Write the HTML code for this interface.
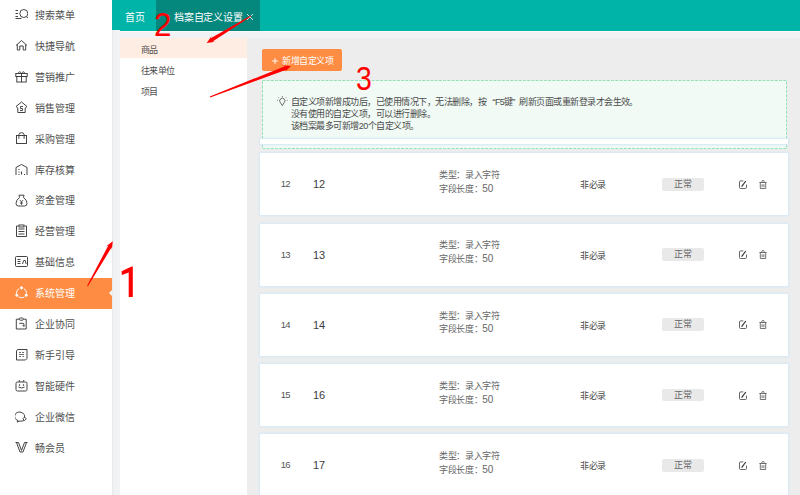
<!DOCTYPE html>
<html lang="zh-CN">
<head>
<meta charset="utf-8">
<style>
*{margin:0;padding:0;box-sizing:border-box}
html,body{width:800px;height:495px;overflow:hidden;background:#ededed;font-family:"Liberation Sans",sans-serif;color:#333}
.a{position:absolute;white-space:nowrap}
#side{position:absolute;left:0;top:0;width:112px;height:495px;background:#fff}
.mi{position:absolute;left:0;width:112px;height:31px}
.mi svg{position:absolute;left:15px;top:8.2px;width:13px;height:13px}
.mi span{position:absolute;left:35px;top:0;line-height:31px;font-size:10px;color:#505050}
.mi.on{background:#fe8c42}
.mi.on span{color:#fff}
#gap{position:absolute;left:112px;top:30px;width:8px;height:465px;background:#f1f2f4}
#gap:before{content:"";position:absolute;left:0;top:0;width:2px;height:100%;background:linear-gradient(90deg,#e6e7e9,#f1f2f4)}
#hdr{position:absolute;left:112px;top:0;width:688px;height:30.9px;background:#00b4a7}
#band{position:absolute;left:112px;top:30.9px;width:688px;height:6.9px;background:#f1f2f4;border-top:1px solid #faf9fb}
#sub{position:absolute;left:120px;top:37.6px;width:127.4px;height:458px;background:#fff}
.si{position:absolute;left:21px;font-size:9px;line-height:21px;color:#505050;letter-spacing:-0.55px;margin-top:1.7px}
.btn{position:absolute;left:262px;top:49px;width:80px;height:22px;background:#fe8c42;border-radius:2px;color:#fff;font-size:9px;line-height:22px;letter-spacing:-0.5px}
#tip{position:absolute;left:262px;top:80px;width:525px;height:69px;background:#f1faf5}
.tl{position:absolute;left:29px;font-size:9px;line-height:12px;color:#4a4a4a;letter-spacing:-0.52px;margin-top:0.8px}
.card{position:absolute;left:260px;width:528px;height:62px;background:#fff;box-shadow:0 0 1.5px 0.6px rgba(214,232,248,1)}
.c1{position:absolute;left:20.8px;top:0px;line-height:62px;font-size:9.5px;color:#555;letter-spacing:-0.8px}
.c2{position:absolute;left:53px;top:0;line-height:62px;font-size:11px;color:#3c3c3c}
.c3{position:absolute;left:179px;font-size:9px;line-height:13px;color:#666;letter-spacing:-0.35px}
.c4{position:absolute;left:320px;top:1px;line-height:62px;font-size:9px;color:#4a4a4a;letter-spacing:-0.4px}
.bd{position:absolute;left:401.8px;top:24.6px;width:42px;height:12.6px;background:#e9e9e9;border-radius:2px;font-size:9px;line-height:13px;text-align:center;color:#666;letter-spacing:-0.4px}
.ic{position:absolute;top:26.6px;width:8px;height:9px}
.red{position:absolute;color:#ff0000;font-family:"Liberation Sans",sans-serif;line-height:1}
</style>
</head>
<body>
<div id="hdr">
  <div class="a" style="left:13px;top:2.5px;line-height:30px;font-size:10px;color:#fff">首页</div>
  <div class="a" style="left:44px;top:0;width:104px;height:30.9px;background:#04877d"></div>
  <div class="a" style="left:62px;top:2.5px;line-height:30px;font-size:10px;color:#fff;letter-spacing:-0.25px">档案自定义设置</div>
  <svg class="a" style="left:134px;top:13px;width:8px;height:8px" viewBox="0 0 8 8" stroke="#e6f3f2" stroke-width="0.9"><path d="M1 1L7 7M7 1L1 7"/></svg>
</div>
<div id="band"></div>
<div id="side">
  <div class="mi" style="top:0"><svg viewBox="0 0 13 13" fill="none" stroke="#3a3a3a" stroke-width="0.95"><path d="M0.5 2.5h2.5M0.5 5.5h2.5M0.5 8.5h2.5M0.5 10.5h6"/><circle cx="8.8" cy="5.5" r="4"/><path d="M11.5 8.5l1.5 1.8"/></svg><span>搜索菜单</span></div>
  <div class="mi" style="top:30.9px"><svg viewBox="0 0 13 13" fill="none" stroke="#3a3a3a" stroke-width="0.95"><path d="M1 6.5L6.5 1.5L12 6.5M2.3 5.5v5.5h2.5v-4h3.4v4h2.5v-5.5"/></svg><span>快捷导航</span></div>
  <div class="mi" style="top:61.8px"><svg viewBox="0 0 13 13" fill="none" stroke="#3a3a3a" stroke-width="0.95"><rect x="0.8" y="3.5" width="11.4" height="3"/><rect x="1.8" y="6.5" width="9.4" height="5.5"/><path d="M6.5 3.5v8.5M6.5 3.5C5 1 3.5 1.5 3.5 3.5M6.5 3.5C8 1 9.5 1.5 9.5 3.5"/></svg><span>营销推广</span></div>
  <div class="mi" style="top:92.7px"><svg viewBox="0 0 13 13" fill="none" stroke="#3a3a3a" stroke-width="0.95"><path d="M6.5 1L1 5.5l1.8 1.5V11.5h7.4V7l1.8-1.5z"/><path d="M8 5.5H5.5v2h2v2H5" stroke-width="0.9"/></svg><span>销售管理</span></div>
  <div class="mi" style="top:123.6px"><svg viewBox="0 0 13 13" fill="none" stroke="#3a3a3a" stroke-width="0.95"><rect x="1.5" y="3.5" width="10" height="8"/><path d="M3.9 6.8V2.6Q3.9 0.7 6.5 0.7Q9.1 0.7 9.1 2.6V6.8"/></svg><span>采购管理</span></div>
  <div class="mi" style="top:154.5px"><svg viewBox="0 0 13 13" fill="none" stroke="#3a3a3a" stroke-width="0.95"><path d="M1 12V4.5L6.5 1.5L12 4.5V12"/><path d="M3.5 6.5h1M3.5 9h1M3.5 11.5h1M6.5 8.5v3M9 11.5h1" stroke-width="1.1"/></svg><span>库存核算</span></div>
  <div class="mi" style="top:185.4px"><svg viewBox="0 0 13 13" fill="none" stroke="#3a3a3a" stroke-width="0.95"><path d="M4 1.2h5L8.5 3.5Q12 6 12 9.5Q12 12 9.5 12h-6Q1 12 1 9.5Q1 6 4.5 3.5z"/><path d="M4.8 6l1.7 1.8L8.2 6M6.5 7.8v3M5 9h3" stroke-width="0.9"/></svg><span>资金管理</span></div>
  <div class="mi" style="top:216.3px"><svg viewBox="0 0 13 13" fill="none" stroke="#3a3a3a" stroke-width="0.95"><path d="M3.5 2H1.5v10.5h10V2H9.5"/><rect x="4" y="1" width="5" height="2"/><path d="M3.5 5h6M3.5 7.5h6M3.5 10h6"/></svg><span>经营管理</span></div>
  <div class="mi" style="top:247.2px"><svg viewBox="0 0 13 13" fill="none" stroke="#3a3a3a" stroke-width="0.95"><rect x="0.5" y="1.5" width="12" height="10" rx="1"/><path d="M2.5 4.5h3M2.5 6.5h3M2.5 8.5h3M7.5 9l1.2-3.5h1.5l1 3.5"/></svg><span>基础信息</span></div>
  <div class="mi on" style="top:278px"><svg viewBox="0 0 13 13" fill="none" stroke="#fff" stroke-width="1"><path d="M4.2 2.6A5 5 0 0 0 1.5 7.5M8.8 2.6A5 5 0 0 1 11.5 7.5M3.5 10.8A5 5 0 0 0 9.5 10.8"/><circle cx="6.5" cy="1.8" r="1.1" fill="#fff"/><circle cx="1.8" cy="9.2" r="1.1" fill="#fff"/><circle cx="11.2" cy="9.2" r="1.1" fill="#fff"/></svg><span>系统管理</span>
    <div style="position:absolute;left:109px;top:11.7px;width:0;height:0;border-top:3px solid transparent;border-bottom:3px solid transparent;border-right:3px solid #eef6fa"></div></div>
  <div class="mi" style="top:309px"><svg viewBox="0 0 13 13" fill="none" stroke="#3a3a3a" stroke-width="0.95"><path d="M4 2.2H1.3V12h9.9V2.2H8.6"/><rect x="4.2" y="1" width="4.2" height="2.2" rx="1.1"/><path d="M4.3 6.3H8Q8.8 6.3 8.8 7.1V9.3M7.8 8.4l1 1 1-1"/></svg><span>企业协同</span></div>
  <div class="mi" style="top:339.9px"><svg viewBox="0 0 13 13" fill="none" stroke="#3a3a3a" stroke-width="0.95"><path d="M2.5 1.5h9.5v9l-1.5 1.5H1.5V3z"/><path d="M4 4.5h2M7 4.5h2M4 6.5h5M4 8.5h2M7.5 8.5h1.5" stroke="#666"/></svg><span>新手引导</span></div>
  <div class="mi" style="top:370.8px"><svg viewBox="0 0 13 13" fill="none" stroke="#3a3a3a" stroke-width="0.95"><rect x="1" y="3" width="11" height="9" rx="1.5"/><path d="M4 1l1 2M9 1l-1 2M3.5 8q3 2 6 0"/><circle cx="4.5" cy="6" r=".4"/><circle cx="8.5" cy="6" r=".4"/></svg><span>智能硬件</span></div>
  <div class="mi" style="top:401.7px"><svg viewBox="0 0 13 13" fill="none" stroke="#3a3a3a" stroke-width="0.95"><path d="M9.5 7.5A5 4.3 0 1 0 3 10.5L2 12l3-1q2 .5 4-.5"/><path d="M9.5 7l1.8 1.8L9.5 10.6L7.8 8.8z"/></svg><span>企业微信</span></div>
  <div class="mi" style="top:432.6px"><svg viewBox="0 0 13 13" fill="none" stroke="#3a3a3a" stroke-width="0.95"><path d="M0.5 1.5h3M9.5 1.5h3M1.5 1.5L5 11h3l3.5-9.5M3.5 1.5L6.5 9.5L9.5 1.5"/></svg><span>畅会员</span></div>
</div>
<div id="gap"></div>
<div id="sub">
  <div class="a" style="left:0;top:0;width:127.4px;height:20.8px;background:#feede3"></div>
  <div class="si" style="top:1px">商品</div>
  <div class="si" style="top:22px">往来单位</div>
  <div class="si" style="top:43px">项目</div>
</div>
<div class="btn"><svg class="a" style="left:10px;top:8.5px;width:6px;height:6px" viewBox="0 0 6 6" stroke="#fff" stroke-width="0.9"><path d="M0 3H6M3 0V6"/></svg><span class="a" style="left:20px;top:0.8px">新增自定义项</span></div>
<div id="tip">
  <svg class="a" style="left:0;top:0;width:525px;height:69px" viewBox="0 0 525 69"><rect x="0.5" y="0.5" width="524" height="68" fill="none" stroke="#95dfb7" stroke-width="1" stroke-dasharray="3 1.2"/></svg>
  <svg class="a" style="left:15px;top:16px;width:11px;height:11px" viewBox="0 0 11 11" fill="none" stroke="#505050" stroke-width="0.85"><path d="M3.4 6.6A2.6 2.6 0 1 1 7.2 6.6L5.3 9.6Z"/><path d="M5.3 0v1M1.3 1.2l.6.6M9.3 1.2l-.6.6M0 4.3h.9M9.7 4.3h.9" stroke-width="0.8"/></svg>
  <div class="tl" style="top:14.8px">自定义项新增成功后，已使用情况下，无法删除，按<span style="display:inline-block;width:9px;text-align:right">“</span><span style="letter-spacing:-0.9px">F5</span>键<span style="display:inline-block;width:7px;text-align:left">”</span>刷新页面或重新登录才会生效。</div>
  <div class="tl" style="top:27.2px">没有使用的自定义项，可以进行删除。</div>
  <div class="tl" style="top:39.5px">该档案最多可新增20个自定义项。</div>
</div>
<div class="a" style="left:260px;top:139px;width:528px;height:5px;background:#fff;box-shadow:0 0 1.5px 0.6px rgba(214,232,248,1)"></div>

<div class="card" style="top:153.4px">
  <div class="c1">12</div><div class="c2">12</div>
  <div class="c3" style="top:15.8px">类型：录入字符</div><div class="c3" style="top:28.4px">字段长度：<span style="font-size:10px;letter-spacing:0">50</span></div>
  <div class="c4">非必录</div>
  <div class="bd">正常</div>
  <svg class="ic" style="left:478.5px" viewBox="0 0 8 9" fill="none" stroke="#555" stroke-width="0.9"><path d="M4.3 0.9H1.6Q0.5 0.9 0.5 2V7.4Q0.5 8.5 1.6 8.5H6.4Q7.5 8.5 7.5 7.4V4.6"/><path d="M2.6 6.6L6.8 1" stroke="#333" stroke-width="1.2"/></svg>
  <svg class="ic" style="left:498.5px" viewBox="0 0 8 9" fill="none" stroke="#505050" stroke-width="0.8"><path d="M0.4 2.5H7.6M2.9 2.5V1.3Q2.9 0.5 4 0.5Q5.1 0.5 5.1 1.3V2.5M1.3 2.5V8.5H6.7V2.5M3.1 4.2V7.2M4.9 4.2V7.2"/></svg>
</div>
<div class="card" style="top:223.65px">
  <div class="c1">13</div><div class="c2">13</div>
  <div class="c3" style="top:15.8px">类型：录入字符</div><div class="c3" style="top:28.4px">字段长度：<span style="font-size:10px;letter-spacing:0">50</span></div>
  <div class="c4">非必录</div>
  <div class="bd">正常</div>
  <svg class="ic" style="left:478.5px" viewBox="0 0 8 9" fill="none" stroke="#555" stroke-width="0.9"><path d="M4.3 0.9H1.6Q0.5 0.9 0.5 2V7.4Q0.5 8.5 1.6 8.5H6.4Q7.5 8.5 7.5 7.4V4.6"/><path d="M2.6 6.6L6.8 1" stroke="#333" stroke-width="1.2"/></svg>
  <svg class="ic" style="left:498.5px" viewBox="0 0 8 9" fill="none" stroke="#505050" stroke-width="0.8"><path d="M0.4 2.5H7.6M2.9 2.5V1.3Q2.9 0.5 4 0.5Q5.1 0.5 5.1 1.3V2.5M1.3 2.5V8.5H6.7V2.5M3.1 4.2V7.2M4.9 4.2V7.2"/></svg>
</div>
<div class="card" style="top:293.9px">
  <div class="c1">14</div><div class="c2">14</div>
  <div class="c3" style="top:15.8px">类型：录入字符</div><div class="c3" style="top:28.4px">字段长度：<span style="font-size:10px;letter-spacing:0">50</span></div>
  <div class="c4">非必录</div>
  <div class="bd">正常</div>
  <svg class="ic" style="left:478.5px" viewBox="0 0 8 9" fill="none" stroke="#555" stroke-width="0.9"><path d="M4.3 0.9H1.6Q0.5 0.9 0.5 2V7.4Q0.5 8.5 1.6 8.5H6.4Q7.5 8.5 7.5 7.4V4.6"/><path d="M2.6 6.6L6.8 1" stroke="#333" stroke-width="1.2"/></svg>
  <svg class="ic" style="left:498.5px" viewBox="0 0 8 9" fill="none" stroke="#505050" stroke-width="0.8"><path d="M0.4 2.5H7.6M2.9 2.5V1.3Q2.9 0.5 4 0.5Q5.1 0.5 5.1 1.3V2.5M1.3 2.5V8.5H6.7V2.5M3.1 4.2V7.2M4.9 4.2V7.2"/></svg>
</div>
<div class="card" style="top:364.15px">
  <div class="c1">15</div><div class="c2">16</div>
  <div class="c3" style="top:15.8px">类型：录入字符</div><div class="c3" style="top:28.4px">字段长度：<span style="font-size:10px;letter-spacing:0">50</span></div>
  <div class="c4">非必录</div>
  <div class="bd">正常</div>
  <svg class="ic" style="left:478.5px" viewBox="0 0 8 9" fill="none" stroke="#555" stroke-width="0.9"><path d="M4.3 0.9H1.6Q0.5 0.9 0.5 2V7.4Q0.5 8.5 1.6 8.5H6.4Q7.5 8.5 7.5 7.4V4.6"/><path d="M2.6 6.6L6.8 1" stroke="#333" stroke-width="1.2"/></svg>
  <svg class="ic" style="left:498.5px" viewBox="0 0 8 9" fill="none" stroke="#505050" stroke-width="0.8"><path d="M0.4 2.5H7.6M2.9 2.5V1.3Q2.9 0.5 4 0.5Q5.1 0.5 5.1 1.3V2.5M1.3 2.5V8.5H6.7V2.5M3.1 4.2V7.2M4.9 4.2V7.2"/></svg>
</div>
<div class="card" style="top:434.4px">
  <div class="c1">16</div><div class="c2">17</div>
  <div class="c3" style="top:15.8px">类型：录入字符</div><div class="c3" style="top:28.4px">字段长度：<span style="font-size:10px;letter-spacing:0">50</span></div>
  <div class="c4">非必录</div>
  <div class="bd">正常</div>
  <svg class="ic" style="left:478.5px" viewBox="0 0 8 9" fill="none" stroke="#555" stroke-width="0.9"><path d="M4.3 0.9H1.6Q0.5 0.9 0.5 2V7.4Q0.5 8.5 1.6 8.5H6.4Q7.5 8.5 7.5 7.4V4.6"/><path d="M2.6 6.6L6.8 1" stroke="#333" stroke-width="1.2"/></svg>
  <svg class="ic" style="left:498.5px" viewBox="0 0 8 9" fill="none" stroke="#505050" stroke-width="0.8"><path d="M0.4 2.5H7.6M2.9 2.5V1.3Q2.9 0.5 4 0.5Q5.1 0.5 5.1 1.3V2.5M1.3 2.5V8.5H6.7V2.5M3.1 4.2V7.2M4.9 4.2V7.2"/></svg>
</div>

<svg class="a" style="left:0;top:0;width:800px;height:495px" viewBox="0 0 800 495">
  <polygon fill="#ff0000" points="87.9,286.2 111.6,247.3 111.8,249.9 112.8,241.3 105.9,246.6 108.3,245.4 87.1,285.8"/>
  <polygon fill="#ff0000" points="250.5,15.8 210.7,38.3 211.8,35.8 206.7,42.9 215.3,41.7 212.6,41.5 251.1,16.6"/>
  <polygon fill="#ff0000" points="210.2,97.5 286.3,69.8 284.8,71.9 291.0,65.9 282.3,65.6 284.9,66.2 209.8,96.5"/>
</svg>
<svg class="a" style="left:0;top:0;width:800px;height:495px" viewBox="0 0 800 495"><path fill="#ff0000" d="M131.6,266.4 L132.8,266.6 L132.8,297 L128.7,297 L128.7,272.6 L121.8,275 L121.6,271.2 Z"/></svg>
<div class="red" style="left:154px;top:7.5px;font-size:33px;transform:scaleX(0.95);transform-origin:left top">2</div>
<div class="red" style="left:356.3px;top:62.3px;font-size:33px;transform:scaleX(0.86);transform-origin:left top">3</div>
</body>
</html>
